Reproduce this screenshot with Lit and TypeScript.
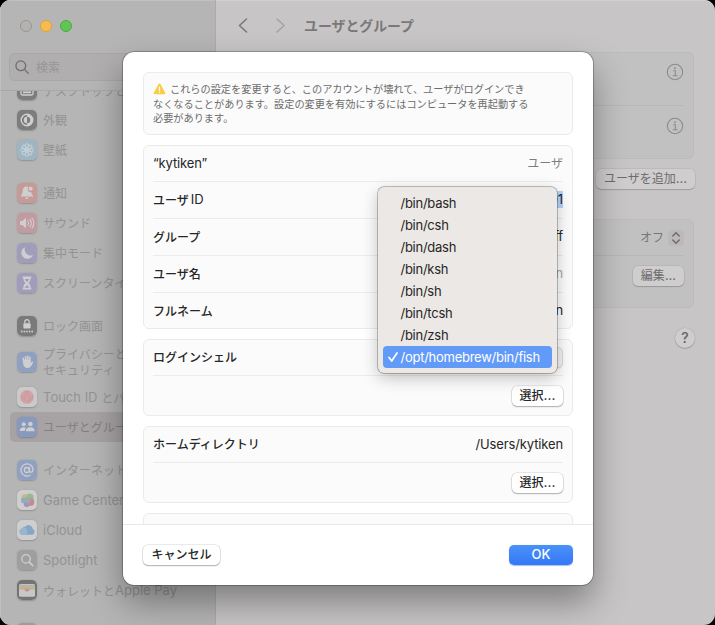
import { LitElement, html, svg, css, nothing, type TemplateResult } from "lit";
import { customElement, property } from "lit/decorators.js";
import { classMap } from "lit/directives/class-map.js";

const shared = css`
  * { box-sizing: border-box; }
  svg { display: block; flex: none; }
  .la { font-size: 13px; }
  .jp { line-height: 14px; vertical-align: var(--drop, 0); }
`;

/* Latin runs are set one step larger than the kana and kanji beside them. */
const mixed = (text: string) =>
  text.split(/([\x20-\x7e“”]+)/).filter(Boolean)
    .map((t) => html`<span class=${/^[\x20-\x7e“”]/.test(t) ? "la" : "jp"}>${t}</span>`);

const W = "#d0cfcf";
const glyphs: Record<string, { bg: string; art: TemplateResult }> = {
  dock: { bg: "#7d7d7d", art: svg`<rect x="4" y="5" width="12" height="10" rx="1.5" fill="none" stroke="${W}" stroke-width="1.3"/><rect x="6" y="11.4" width="8" height="1.8" fill="${W}"/>` },
  look: { bg: "#7d7d7d", art: svg`<circle cx="10" cy="10" r="5.8" fill="none" stroke="${W}" stroke-width="1.4"/><path d="M10 6.8a3.2 3.2 0 0 0 0 6.4z" fill="${W}"/><path d="M10 4.2a5.8 5.8 0 0 1 0 11.6v-2.6a3.2 3.2 0 0 0 0-6.4z" fill="${W}"/>` },
  wall: { bg: "#9fb5c1", art: svg`${[0, 45, 90, 135, 180, 225, 270, 315].map((a) => svg`<ellipse cx="10" cy="5.9" rx="1.9" ry="2.1" fill="none" stroke="#c5d1d8" stroke-width="1" transform="rotate(${a} 10 10)"/>`)}<circle cx="10" cy="10" r="1.8" fill="#c5d1d8"/>` },
  bell: { bg: "#c59a97", art: svg`<path d="M9.6 3.6c-2.6 0-3.8 1.8-3.9 4-.1 2.900-.5 3.600-1.700 4.900-.4.500-.2 1.100.4 1.100h11.100c.6 0 .8-.6.4-1.100-1-1.100-1.500-2-1.600-3.500a2.800 2.800 0 0 1-2.600-4.800c-.6-.4-1.300-.6-2.100-.6zM8.200 14.600h3.500c-.2.900-.9 1.500-1.750 1.500s-1.550-.6-1.750-1.500z" fill="${W}"/><circle cx="13.700" cy="5.800" r="2" fill="${W}"/>` },
  sound: { bg: "#c29ba1", art: svg`<path d="M3 8h2.300L9 4.700v10.600L5.300 12H3z" fill="${W}"/><path d="M10.800 7.700c1 1.400 1 3.200 0 4.600M12.900 6.300c1.700 2.200 1.700 5.200 0 7.400M15 5c2.300 3 2.300 7 0 10" fill="none" stroke="${W}" stroke-width="1.100" stroke-linecap="round"/>` },
  moon: { bg: "#a09dba", art: svg`<path d="M8 4.300a6 6 0 1 0 7.900 7.900A6.200 6.200 0 0 1 8 4.300z" fill="${W}"/>` },
  glass: { bg: "#a19cbb", art: svg`<path d="M5.700 3.500h8.600v1.700h-.7c0 2.500-1 3.700-2.300 4.800 1.300 1.100 2.300 2.300 2.300 4.800h.7v1.700H5.700v-1.700h.7c0-2.500 1-3.700 2.300-4.800-1.300-1.100-2.300-2.300-2.300-4.800h-.7z" fill="${W}"/><path d="M8 6h4c-.4 1.400-1 2.200-2 3-1-.8-1.600-1.600-2-3zM7.500 14.800 10 12l2.500 2.800z" fill="#a09bbb"/>` },
  lock: { bg: "#7a7a7a", art: svg`<rect x="6.400" y="7.300" width="7.200" height="5.300" rx="1" fill="${W}"/><path d="M7.800 7.500V5.800a2.200 2.200 0 0 1 4.400 0v1.700" fill="none" stroke="${W}" stroke-width="1.200"/>${[4.800, 7.400, 10, 12.600, 15.200].map((x) => svg`<circle cx="${x}" cy="15.500" r=".9" fill="${W}"/>`)}` },
  hand: { bg: "#8fa0c0", art: svg`<path d="M6.700 9.500 6.200 6.300M8.600 8.500V4.800M10.700 8.500V4.200M12.800 9V5.200" stroke="${W}" stroke-width="1.600" stroke-linecap="round"/><path d="M5.900 7.800h7.700v3.300l1.300-1.400c.7-.5 1.500 0 1.100.8-1 2.300-2.100 5.400-5.300 5.400-3.500 0-4.300-2.500-4.600-5z" fill="${W}"/>` },
  touch: { bg: "#cbcaca", art: svg`<circle cx="10" cy="10" r="6.900" fill="#d3a9ad"/><g fill="none" stroke="#c98e96" stroke-width=".6"><circle cx="10" cy="10" r="5.600" stroke-dasharray="9 1.500"/><circle cx="10" cy="10" r="4.200" stroke-dasharray="7 1"/><path d="M7.200 12.600V10a2.800 2.800 0 0 1 5.600 0v3M8.700 14V10.200a1.300 1.300 0 0 1 2.600 0V14.500"/></g>` },
  users: { bg: "#8799be", art: svg`<circle cx="6.700" cy="7.300" r="2" fill="${W}"/><circle cx="13.400" cy="7" r="2.300" fill="${W}"/><path d="M2.700 14c0-2.500 1.700-3.700 4-3.700 1 0 1.700.2 2.300.6-.9.800-1.300 1.800-1.300 3.100zM8.800 14.300c0-2.700 1.900-4.100 4.600-4.100s4.300 1.400 4.300 4.100z" fill="${W}"/>` },
  at: { bg: "#8fa0c0", art: svg`<g fill="none" stroke="${W}" stroke-width="1.300" stroke-linecap="round"><circle cx="9.900" cy="10" r="2.500"/><path d="M12.500 7.500v3.400c0 2.200 3.500 1.700 3.500-1.200 0-3.400-2.600-5.800-6-5.800a6.100 6.100 0 1 0 3.200 11.300"/></g>` },
  game: { bg: "#cfcece", art: svg`<circle cx="8.300" cy="7.800" r="3.900" fill="#c3bb8c"/><circle cx="13" cy="7.200" r="3.600" fill="#98bb96"/><circle cx="7" cy="10.600" r="3" fill="#8fadc4"/><circle cx="13.300" cy="12" r="4" fill="#c58b93"/><circle cx="9.600" cy="14.200" r="2.800" fill="#a791c2"/><circle cx="10.300" cy="10.300" r="3" fill="#9aaea6"/>` },
  cloud: { bg: "#cfcece", art: svg`<path d="M5.700 14.800a3.200 3.200 0 0 1-.7-6.300 3 3 0 0 1 3.300-1.800 4.200 4.200 0 0 1 7.400 2 3.200 3.200 0 0 1-.7 6.100z" fill="#86a6c6"/><path d="M5.700 14.800a3.200 3.200 0 0 1-.7-6.300 3 3 0 0 1 5 1.500c1 2 0 4-1.500 4.800z" fill="#9ab5ce"/>` },
  spot: { bg: "#a09f9f", art: svg`<circle cx="9" cy="8.900" r="4.200" fill="none" stroke="${W}" stroke-width="1.300"/><path d="m12.200 12.100 3.600 3.500" stroke="${W}" stroke-width="1.500" stroke-linecap="round"/>` },
  wallet: { bg: "#747474", art: svg`<rect x="2" y="4" width="16" height="12.500" rx="1.500" fill="#c4c3c2"/><path d="M2.500 5h15v1.500h-15z" fill="#a9b3b8"/><path d="M2.500 6.200h15v2h-15z" fill="#c6b286"/><path d="M2.500 8.200h15v1.500h-15z" fill="#b6a890"/><path d="M2 9.500h5.500c.5 1.600 1.300 2.200 2.500 2.200s2-.6 2.500-2.200H18V15a1.500 1.500 0 0 1-1.500 1.500h-13A1.500 1.500 0 0 1 2 15z" fill="#c8c7c6"/><path d="M7.500 9.200c.5 1.500 1.300 2.300 2.500 2.300s2-.8 2.500-2.300z" fill="#c08f8b"/>` },
  blank: { bg: "#9c9c9c", art: svg`` },
};

@customElement("side-item")
class SideItem extends LitElement {
  @property() icon = "blank";
  @property() label = "";
  @property({ type: Boolean }) selected = false;
  static styles = [shared, css`
    :host { display: block; --drop: -1px; }
    .row { min-height: 30px; padding: 0 7px; display: flex; align-items: center; gap: 6px; border-radius: 5px; color: #939292; line-height: 16px; }
    .tall { height: 41px; }
    .selected { background: #a7a2a3; color: #828181; }
    .tile { width: 20px; height: 20px; border-radius: 5px; box-shadow: 0 .5px 1.500px rgba(0,0,0,.2); }
    .text { white-space: pre; }
  `];
  render() {
    const g = glyphs[this.icon];
    return html`<div class=${classMap({ row: true, selected: this.selected, tall: this.label.includes("\n") })}>
      <svg class="tile" viewBox="0 0 20 20"><rect width="20" height="20" rx="4.800" fill=${g.bg} />${g.art}</svg>
      <span class="text">${mixed(this.label)}</span>
    </div>`;
  }
}

@customElement("push-button")
class PushButton extends LitElement {
  @property() label = "";
  @property() kind = "";
  static styles = [shared, css`
    :host { display: block; }
    .btn { height: 20px; border-radius: 5px; background: #fff; color: #262626; font-weight: 500; line-height: 19px; text-align: center; box-shadow: 0 0 0 .5px rgba(0,0,0,.16), 0 1px 1.500px rgba(0,0,0,.26); }
    .dim { background: #cfcdce; color: #6d6c6c; font-weight: 400; box-shadow: 0 0 0 .5px rgba(0,0,0,.1), 0 1px 1px rgba(0,0,0,.16); }
    .primary { background: linear-gradient(#4a91f8, #3478f6); color: #fff; box-shadow: 0 .5px 1px rgba(40,90,200,.4); }
  `];
  render() {
    return html`<div class="btn ${this.kind}">${mixed(this.label)}</div>`;
  }
}

const groups: [string, string][][] = [
  [["dock", "デスクトップとDock"], ["look", "外観"], ["wall", "壁紙"]],
  [["bell", "通知"], ["sound", "サウンド"], ["moon", "集中モード"], ["glass", "スクリーンタイム"]],
  [["lock", "ロック画面"], ["hand", "プライバシーと\nセキュリティ"], ["touch", "Touch ID とパスワード"], ["users", "ユーザとグループ"]],
  [["at", "インターネット"], ["game", "Game Center"], ["cloud", "iCloud"], ["spot", "Spotlight"], ["wallet", "ウォレットとApple Pay"]],
  [["blank", ""]],
];
const shells = ["/bin/bash", "/bin/csh", "/bin/dash", "/bin/ksh", "/bin/sh", "/bin/tcsh", "/bin/zsh", "/opt/homebrew/bin/fish"];
const fields: [string, string, string][] = [
  ["“kytiken”", "ユーザ", "muted"],
  ["ユーザID", "501", "picked"],
  ["グループ", "staff", ""],
  ["ユーザ名", "kytiken", "faint"],
  ["フルネーム", "kytiken", ""],
];
const info = html`<svg width="18" height="18" viewBox="0 0 18 18" fill="none" stroke="#8c8b8b"><circle cx="9" cy="9" r="7.700" stroke-width="1.100"/><path d="M7.300 7.700h2v5M6.800 12.800h4.800" stroke-width="1.100"/><circle cx="9" cy="5.200" r=".95" fill="#8c8b8b" stroke="none"/></svg>`;

@customElement("app-root")
class AppRoot extends LitElement {
  static styles = [shared, css`
    :host { display: block; width: 715px; height: 625px; background: #000; position: relative; overflow: hidden; font: 12px/16px Inter, "Noto Sans CJK JP", sans-serif; color: #262626; }
    .window { height: 625px; display: flex; border-radius: 11px; overflow: hidden; background: #c7c5c6; box-shadow: inset 0 1px 0 #d2d1d1; }
    .side { width: 216px; background: #b6b5b5; border-right: 1px solid #acabab; box-shadow: inset 1px 1px 0 #c2c1c1; display: flex; flex-direction: column; overflow: hidden; }
    .top { height: 91px; flex: none; border-bottom: 1px solid #a9a8a8; padding: 20px 9px 0; }
    .lights { display: flex; gap: 8px; padding-left: 11px; }
    .light { width: 12px; height: 12px; border-radius: 50%; border: 1px solid #979593; background: #b5b3b1; }
    .light.y { background: #f5bd4f; border-color: #dfa13b; }
    .light.g { background: #61c554; border-color: #4cab40; }
    .search { --drop: -1px; margin-top: 21px; height: 28px; border-radius: 6px; border: 1px solid #a8a6a6; background: #b0aeae; display: flex; align-items: center; gap: 7px; padding-left: 5px; color: #979696; }
    .list { flex: 1; min-height: 0; overflow: hidden; }
    .inner { margin-top: -16px; padding: 0 10px; display: flex; flex-direction: column; gap: 13px; }
    .main { flex: 1; display: flex; flex-direction: column; padding: 0 20px; color: #777576; }
    .bar { height: 52px; flex: none; display: flex; align-items: center; gap: 19px; }
    .title { font-size: 13.900px; font-weight: 700; color: #7a7879; line-height: 20px; }
    .panel { border: 1px solid #bcbbbb; border-radius: 6px; background: #c2c1c1; width: 458px; padding: 0 9px; }
    .users { height: 107px; }
    .login { height: 89px; }
    .prow { display: flex; align-items: center; justify-content: flex-end; }
    .people { height: 53px; padding-bottom: 14px; }
    .line { border-bottom: 1px solid #b8b7b7; }
    .opt { height: 36px; gap: 4px; }
    .edit { height: 39px; }
    .add { width: 99px; margin: 10px 0 30px 360px; }
    .ed { width: 51px; }
    .help { width: 20px; height: 20px; margin: 20px 0 0 439px; border-radius: 50%; background: #cfcdce; text-align: center; font: 500 14px/20px Inter; color: #646263; box-shadow: 0 0 0 .5px rgba(0,0,0,.1), 0 1px 1px rgba(0,0,0,.16); }
    .sheet { position: absolute; left: 123px; top: 52px; width: 470px; height: 533px; border-radius: 11px; background: #fff; display: flex; flex-direction: column; box-shadow: 0 0 0 .5px rgba(0,0,0,.35), 0 0 2px rgba(0,0,0,.3), 0 17px 34px rgba(0,0,0,.36); }
    .body { height: 473px; overflow: hidden; padding: 20px 20px 0; border-bottom: 1px solid #e9e9e9; display: flex; flex-direction: column; gap: 10px; }
    .card { flex: none; border: 1px solid #ebebeb; border-radius: 6px; background: #fbfbfb; padding: 0 9px; }
    .notice { height: 63px; padding-top: 9px; font-size: 10.190px; line-height: 14.700px; color: #6c6c6c; white-space: nowrap; }
    .nline { display: flex; align-items: center; height: 14.700px; gap: 4px; }
    .field { --drop: -1px; height: 37px; padding-bottom: 1px; display: flex; align-items: center; justify-content: space-between; border-bottom: 1px solid #ebebeb; }
    .field:first-child { height: 36px; }
    .fields .field:last-child { border: 0; height: 35px; padding: 0; }
    .field .la { letter-spacing: -.13px; }
    .strong .jp { font-weight: 500; }
    .jp + .la { margin-left: 2px; }
    .muted { color: #7e7e7e; }
    .faint { color: #a6a6a6; }
    .picked { background: #b3d3fb; }
    .pick { height: 39px; display: flex; justify-content: flex-end; align-items: center; }
    .choose { width: 51px; }
    .popup { width: 180px; height: 21px; border-radius: 5px; background: #f0f0f0; border: 1px solid #d8d8d8; box-shadow: 0 1px 1px rgba(0,0,0,.08); }
    .stub { height: 60px; }
    .foot { flex: 1; padding: 0 20px; display: flex; align-items: center; justify-content: space-between; }
    .cancel { width: 77px; }
    .ok { width: 64px; }
    .menu { position: absolute; left: 378px; top: 187px; width: 179px; height: 186px; border-radius: 6px; padding: 5px; background: #ece8e5; box-shadow: 0 0 0 .7px rgba(0,0,0,.32), 0 5px 16px rgba(0,0,0,.24); }
    .item { height: 22px; line-height: 22px; border-radius: 4px; display: flex; align-items: center; padding-left: 5px; gap: 2.500px; }
    .item .la { letter-spacing: -.26px; }
    .item.on { background: #629af8; color: #fff; }
    .check { width: 10px; height: 10px; }
  `];

  render() {
    return html`
      <div class="window">
        <div class="side">
          <div class="top">
            <div class="lights"><i class="light"></i><i class="light y"></i><i class="light g"></i></div>
            <div class="search">
              <svg width="14" height="14" viewBox="0 0 14 14" fill="none" stroke="#6f6e6e" stroke-width="1.300" stroke-linecap="round"><circle cx="5.800" cy="5.800" r="4.900"/><path d="m9.400 9.400 3.800 3.800"/></svg>
              <span>${mixed("検索")}</span>
            </div>
          </div>
          <div class="list"><div class="inner">
            ${groups.map((g) => html`<div>${g.map(([icon, label]) => html`<side-item icon=${icon} label=${label} ?selected=${icon === "users"}></side-item>`)}</div>`)}
          </div></div>
        </div>
        <div class="main">
          <div class="bar">
            <svg width="49" height="16" viewBox="0 0 49 16" fill="none" stroke-width="1.600" stroke-linecap="round" stroke-linejoin="round"><path d="M10.500 1 3.500 7.500l7 6.500" stroke="#7b797a"/><path d="m41 1 7 6.500-7 6.500" stroke="#a5a3a4"/></svg>
            <span class="title">ユーザとグループ</span>
          </div>
          <div class="panel users">
            <div class="prow people line">${info}</div>
            <div class="prow people">${info}</div>
          </div>
          <push-button class="add" kind="dim" label="ユーザを追加..."></push-button>
          <div class="panel login">
            <div class="prow opt line"><span>オフ</span>
              <svg width="16" height="16" viewBox="0 0 16 16"><rect width="16" height="16" rx="4" fill="#bdb9ba"/><path d="M4.800 6 8 2.800 11.200 6M4.800 10 8 13.200l3.200-3.200" fill="none" stroke="#706e6f" stroke-width="1.600" stroke-linecap="round" stroke-linejoin="round"/></svg>
            </div>
            <div class="prow edit"><push-button class="ed" kind="dim" label="編集..."></push-button></div>
          </div>
          <div class="help">?</div>
        </div>
      </div>

      <div class="sheet">
        <div class="body">
          <div class="card notice">
            <div class="nline"><svg width="13" height="12" viewBox="0 0 13 12"><path d="M5.600 1.100a1 1 0 0 1 1.800 0l4.800 8.700a1 1 0 0 1-.9 1.500H1.700a1 1 0 0 1-.9-1.500z" fill="#f8cd45"/><path d="M6.500 4v3.500" stroke="#fff" stroke-width="1.200" stroke-linecap="round"/><circle cx="6.500" cy="9.300" r=".7" fill="#fff"/></svg><span>これらの設定を変更すると、このアカウントが壊れて、ユーザがログインでき</span></div>
            <div class="nline">なくなることがあります。設定の変更を有効にするにはコンピュータを再起動する</div>
            <div class="nline">必要があります。</div>
          </div>
          <div class="card fields">
            ${fields.map(([k, v, c]) => html`<div class="field"><span class="strong">${mixed(k)}</span><span class=${c || nothing}>${mixed(v)}</span></div>`)}
          </div>
          <div class="card">
            <div class="field"><span class="strong">${mixed("ログインシェル")}</span><div class="popup"></div></div>
            <div class="pick"><push-button class="choose" label="選択..."></push-button></div>
          </div>
          <div class="card">
            <div class="field"><span class="strong">${mixed("ホームディレクトリ")}</span><span>${mixed("/Users/kytiken")}</span></div>
            <div class="pick"><push-button class="choose" label="選択..."></push-button></div>
          </div>
          <div class="card stub"></div>
        </div>
        <div class="foot">
          <push-button class="cancel" label="キャンセル"></push-button>
          <push-button class="ok" kind="primary" label="OK"></push-button>
        </div>
      </div>

      <div class="menu">
        ${shells.map((s, i) => {
          const on = i === shells.length - 1;
          return html`<div class=${classMap({ item: true, on })}>
            <svg class="check" viewBox="0 0 10 10">${on ? svg`<path d="M1 5.500 3.700 9 9 1" fill="none" stroke="#fff" stroke-width="1.700" stroke-linecap="round" stroke-linejoin="round"/>` : nothing}</svg>
            ${mixed(s)}</div>`;
        })}
      </div>`;
  }
}
